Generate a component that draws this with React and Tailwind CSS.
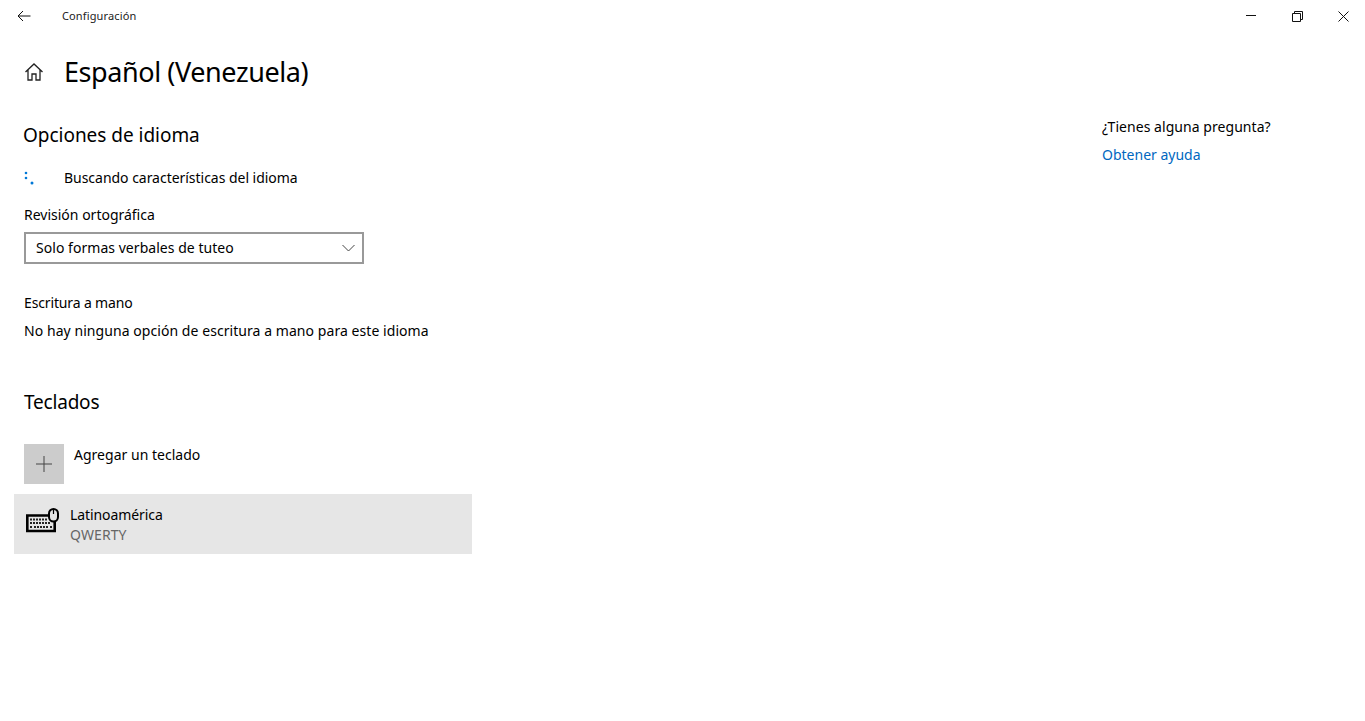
const font = { fontFamily: '"Noto Sans", "Open Sans", sans-serif' };

const WindowButton = ({ children }) => (
  <button className="w-[46px] h-8 flex items-center justify-center">{children}</button>
);

export default function App() {
  return (
    <div className="w-[1365px] h-[721px] bg-white text-black overflow-hidden" style={font}>
      {/* title bar */}
      <div className="h-8 flex items-center">
        <button className="w-12 h-8 flex items-center justify-center">
          <svg width="14" height="12" viewBox="0 0 14 12" fill="none" stroke="#111" strokeWidth="1">
            <path d="M13.5 6H1M6 1 1 6l5 5" />
          </svg>
        </button>
        <span className="ml-[14px] text-[11px] tracking-[0.13px] text-[#222]">Configuración</span>
        <div className="ml-auto flex -mr-px">
          <WindowButton>
            <svg width="10" height="2" viewBox="0 0 10 2"><path d="M0 .5h10" stroke="#111" /></svg>
          </WindowButton>
          <WindowButton>
            <svg width="11" height="11" viewBox="0 0 11 11" fill="none" stroke="#111">
              <path d="M.5 2.500h8v8h-8zM2.500 2.500v-2h8v8h-2" />
            </svg>
          </WindowButton>
          <WindowButton>
            <svg width="11" height="11" viewBox="0 0 11 11" fill="none" stroke="#111">
              <path d="M.5.5l10 10M10.500.5l-10 10" />
            </svg>
          </WindowButton>
        </div>
      </div>

      <div className="flex">
        {/* main column */}
        <div className="w-[1102px] pl-6">
          <div className="flex items-center h-10 mt-5">
            <svg width="20" height="20" viewBox="0 0 20 20" fill="none" stroke="#222" strokeWidth="1.300">
              <path d="M1.500 10 10 2l8.500 8M4 8v10h4v-6h4v6h4V8" />
            </svg>
            <h1 className="ml-5 text-[27px] leading-10 tracking-[-0.42px]">Español (Venezuela)</h1>
          </div>

          <h2 className="mt-[31px] -ml-px text-[19px] leading-6 tracking-[-0.03px]">Opciones de idioma</h2>

          <div className="mt-[19px] flex items-center h-6">
            <svg width="12" height="20" viewBox="0 0 12 20" className="shrink-0">
              <circle cx="2" cy="5" r="1.3" fill="#0078d7" />
              <circle cx="2" cy="10" r="1.3" fill="#0078d7" />
              <circle cx="8" cy="15" r="1.500" fill="#0078d7" />
            </svg>
            <span className="ml-7 text-sm tracking-[-0.03px]">Buscando características del idioma</span>
          </div>

          <p className="mt-[15px] text-sm leading-5">Revisión ortográfica</p>
          <div className="mt-[7px] w-[340px] h-8 border-2 border-[#999] flex items-center justify-between pl-2.5 pr-[7px]">
            <span className="text-sm tracking-[0.04px]">Solo formas verbales de tuteo</span>
            <svg width="13" height="8" viewBox="0 0 13 8" fill="none" stroke="#444">
              <path d="M.5 1l6 6 6-6" />
            </svg>
          </div>

          <p className="mt-[29px] text-sm leading-5 tracking-[-0.14px]">Escritura a mano</p>
          <p className="mt-2 text-sm leading-5 tracking-[0.06px]">No hay ninguna opción de escritura a mano para este idioma</p>

          <h2 className="mt-[49px] text-[19px] leading-6 tracking-[-0.2px]">Teclados</h2>

          <div className="mt-[30px] flex items-start">
            <div className="w-10 h-10 bg-[#cccccc] flex items-center justify-center">
              <svg width="16" height="16" viewBox="0 0 16 16" stroke="#444"><path d="M8 0v16M0 8h16" /></svg>
            </div>
            <span className="ml-2.5 pt-px text-sm leading-5 tracking-[0.02px]">Agregar un teclado</span>
          </div>

          <div className="mt-2.5 -ml-2.5 w-[458px] h-[60px] bg-[#e6e6e6] flex items-center">
            <svg width="34" height="26" viewBox="0 0 34 26" fill="none" className="ml-3 -mt-1.5 shrink-0">
              <path d="M23 7.500H1.300v15.500h27.400v-9" stroke="#000" strokeWidth="2.600" />
              <rect x="23" y="1" width="9" height="12.500" rx="4.500" fill="#e6e6e6" stroke="#000" strokeWidth="2" />
              <path d="M27.500 1v5" stroke="#000" strokeWidth="1.200" />
              <path d="M4 11.500h18M4 15h21M8 19h14" stroke="#222" strokeWidth="2" strokeDasharray="2 1" />
              <path d="M4 19h2M24 19h2" stroke="#222" strokeWidth="2" />
            </svg>
            <div className="ml-2.5 pt-px">
              <p className="text-sm leading-5 tracking-[-0.08px]">Latinoamérica</p>
              <p className="text-sm leading-5 tracking-[0.1px] text-[#666]">QWERTY</p>
            </div>
          </div>
        </div>

        {/* help column */}
        <div className="pt-[85px]">
          <p className="text-sm leading-5 tracking-[0.05px]">¿Tienes alguna pregunta?</p>
          <a className="block mt-2 text-sm leading-5 text-[#0067c0]">Obtener ayuda</a>
        </div>
      </div>
    </div>
  );
}
